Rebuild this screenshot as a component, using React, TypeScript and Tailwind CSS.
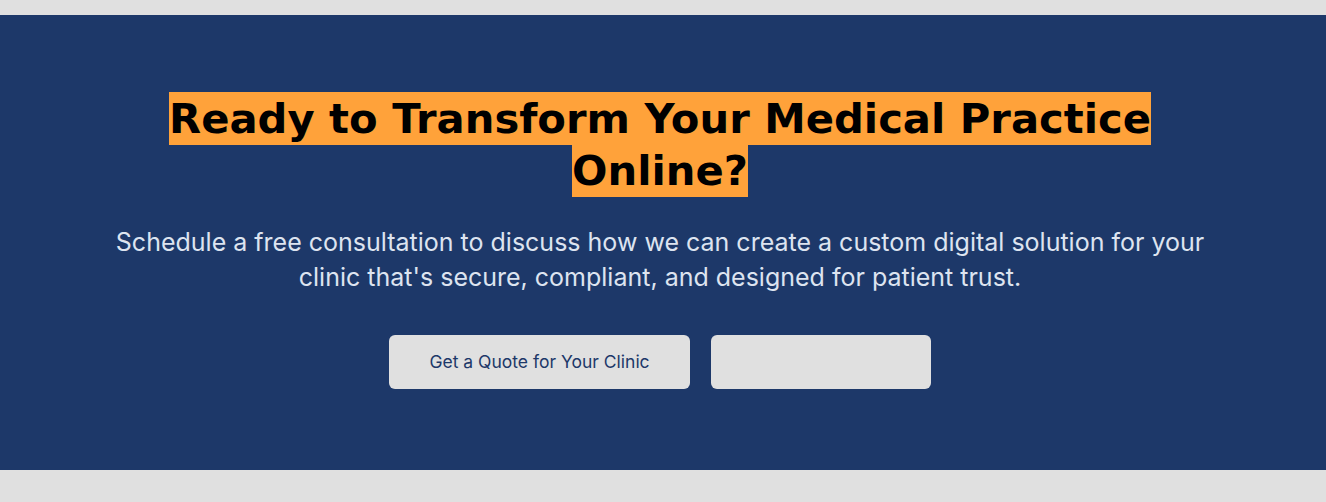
export default function App() {
  return (
    <div className="min-h-[502px] bg-[#e0e0e0] pt-[15px] pb-[32px]">
      <section className="bg-[#1d3869] pl-[21px] pr-[27px] pt-[78px] pb-[81px]">
        <div className="mx-auto flex max-w-[1120px] flex-col items-center text-center">
          <h2 className="font-['DejaVu_Sans',sans-serif] text-[41.7px] font-bold leading-[52px] text-black">
            <span className="box-decoration-clone bg-[#ffa23a] py-[2px]">
              Ready to Transform Your Medical Practice Online?
            </span>
          </h2>
          <p className="mt-[28px] max-w-[1100px] font-['Inter',sans-serif] text-[25px] leading-[35px] text-[#dde4f0]">
            Schedule a free consultation to discuss how we can create a custom
            digital solution for your clinic that's secure, compliant, and
            designed for patient trust.
          </p>
          <div className="mt-[40px] flex gap-[21px]">
            <button
              type="button"
              className="h-[54px] w-[301px] rounded-md bg-[#e0e0e0] font-['Inter',sans-serif] text-[17.5px] text-[#1d3869]"
            >
              Get a Quote for Your Clinic
            </button>
            <button
              type="button"
              className="h-[54px] w-[220px] rounded-md bg-[#e0e0e0]"
            />
          </div>
        </div>
      </section>
    </div>
  );
}
